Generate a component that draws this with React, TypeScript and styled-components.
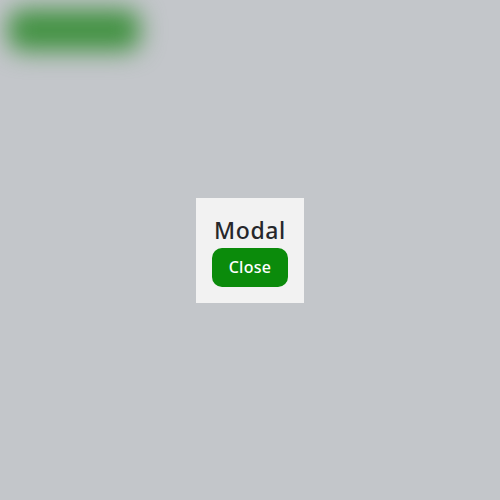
import React from "react";
import styled, { createGlobalStyle } from "styled-components";

const Global = createGlobalStyle`
  html, body { margin: 0; padding: 0; }
  body { background: #c3c6ca; font-family: "Noto Sans", "Open Sans", sans-serif; }
`;

const Page = styled.div`
  width: 500px;
  height: 500px;
  background: #c3c6ca;
  overflow: hidden;
  position: relative;
`;

const Backdrop = styled.div`
  padding: 9px 8px;
  filter: blur(12px);
`;

const GhostButton = styled.div`
  width: 132px;
  height: 42px;
  border-radius: 14px;
  background: #439243;
`;

const Overlay = styled.div`
  position: absolute;
  inset: 0;
  display: flex;
  align-items: center;
  justify-content: center;
`;

const Dialog = styled.div`
  background: #f2f2f2;
  padding: 16px;
  width: 108px;
  height: 105px;
  box-sizing: border-box;
  display: flex;
  flex-direction: column;
  align-items: center;
`;

const Title = styled.h2`
  margin: 0;
  font-size: 23px;
  line-height: 32px;
  font-weight: 500;
  color: #26272b;
  letter-spacing: 0.6px;
`;

const CloseButton = styled.button`
  margin-top: 2px;
  width: 76px;
  height: 39px;
  border: none;
  border-radius: 10px;
  background: #0b8b0b;
  color: #ffffff;
  font-family: "Noto Sans", "Open Sans", sans-serif;
  font-size: 16px;
  font-weight: 500;
  letter-spacing: 0.3px;
  padding: 0;
`;

export default function App() {
  return (
    <>
      <Global />
      <Page>
        <Backdrop>
          <GhostButton />
        </Backdrop>
        <Overlay>
          <Dialog>
            <Title>Modal</Title>
            <CloseButton>Close</CloseButton>
          </Dialog>
        </Overlay>
      </Page>
    </>
  );
}
